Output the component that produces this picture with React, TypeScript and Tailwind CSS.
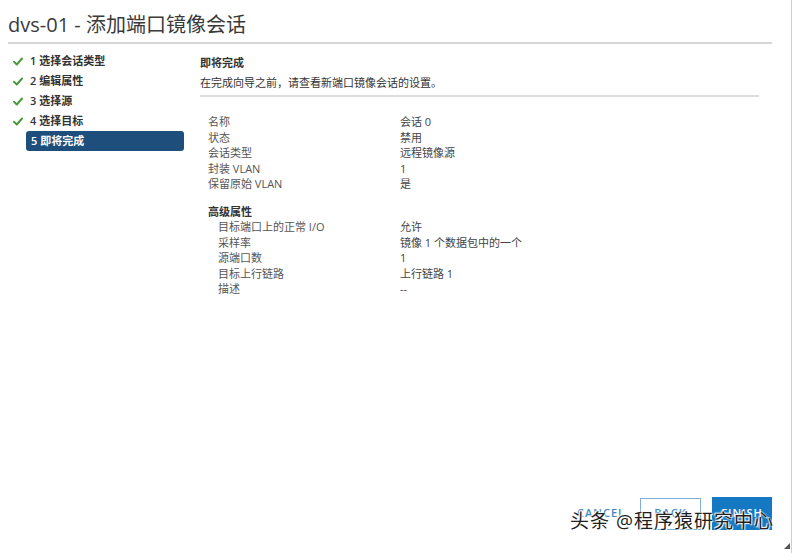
import React from "react";

const font = "font-['Open_Sans','Noto_Sans_CJK_SC',sans-serif]";

const steps = ["1 选择会话类型", "2 编辑属性", "3 选择源", "4 选择目标"];

const basic: [string, string][] = [
  ["名称", "会话 0"],
  ["状态", "禁用"],
  ["会话类型", "远程镜像源"],
  ["封装 VLAN", "1"],
  ["保留原始 VLAN", "是"],
];

const advanced: [string, string][] = [
  ["目标端口上的正常 I/O", "允许"],
  ["采样率", "镜像 1 个数据包中的一个"],
  ["源端口数", "1"],
  ["目标上行链路", "上行链路 1"],
  ["描述", "--"],
];

const Check = () => (
  <svg width="10" height="9" viewBox="0 0 10 9" className="shrink-0">
    <path d="M1 4.8 L3.8 7.5 L9 1.5" fill="none" stroke="#4a9a3c" strokeWidth="2" strokeLinecap="round" strokeLinejoin="round" />
  </svg>
);

export default function App() {
  return (
    <div className={`relative h-[553px] w-[796px] overflow-hidden bg-white ${font}`}>
      <div className="flex h-full w-[792px] flex-col border-r border-[#cfcfcf]">
        <div className="ml-2 mr-[19px] flex h-[44px] items-end border-b-2 border-[#d6d6d6] pb-[3px]">
          <h1 className="text-[20px] leading-[28px] text-[#3a3a3a]">dvs-01 - 添加端口镜像会话</h1>
        </div>

        <div className="flex flex-1">
          <div className="w-[200px] pt-[7px] text-[11px] font-semibold text-[#333]">
            {steps.map((s) => (
              <div key={s} className="flex h-5 items-center gap-[7px] pl-[13px]">
                <Check />
                <span>{s}</span>
              </div>
            ))}
            <div className="ml-[26px] flex h-5 w-[158px] items-center rounded-[3px] bg-[#1e4f7c] pl-[5px] text-white">
              5 即将完成
            </div>
          </div>

          <div className="flex-1 pt-[9px] pr-[32px] text-[11px]">
            <div className="border-b-2 border-[#dcdcdc] pb-[2px]">
              <div className="h-5 leading-5 font-semibold text-[#333]">即将完成</div>
              <div className="h-5 leading-5 text-[#333]">在完成向导之前，请查看新端口镜像会话的设置。</div>
            </div>

            <div className="pl-2 pt-[17px] text-[#555]">
              {basic.map(([k, v]) => (
                <div key={k} className="flex leading-[15.5px]">
                  <span className="w-[192px]">{k}</span>
                  <span className="text-[#444]">{v}</span>
                </div>
              ))}
              <div className="mt-[12px] font-semibold leading-[15.5px] text-[#333]">高级属性</div>
              {advanced.map(([k, v]) => (
                <div key={k} className="flex leading-[15.5px]">
                  <span className="w-[192px] pl-[10px]">{k}</span>
                  <span className="text-[#444]">{v}</span>
                </div>
              ))}
            </div>
          </div>
        </div>

        <div className="mb-[23px] flex h-[33px] items-center justify-end pr-[19px] text-[11px] font-semibold tracking-[1px]">
          <span className="mr-[15px] text-[#3d8ac9]">CANCEL</span>
          <div className="mr-[11px] flex h-[32px] w-[61px] items-center justify-center border border-[#7fb0d8] text-[#3d8ac9]">
            BACK
          </div>
          <div className="flex h-[33px] w-[60px] items-center justify-center bg-[#1479c2] text-white">FINISH</div>
        </div>
      </div>

      <div className="absolute left-[570px] top-[508px] text-[19px] leading-[26px] tracking-[1px] text-[#1f1f1f] [text-shadow:0_0_2px_#fff,1px_1px_1px_#fff,-1px_-1px_1px_#fff]">
        头条 @程序猿研究中心
      </div>
      <svg className="absolute left-[784px] top-[543px]" width="6" height="6" viewBox="0 0 6 6">
        <path d="M6 0 L6 6 L0 6 Z" fill="#555" />
      </svg>
    </div>
  );
}
